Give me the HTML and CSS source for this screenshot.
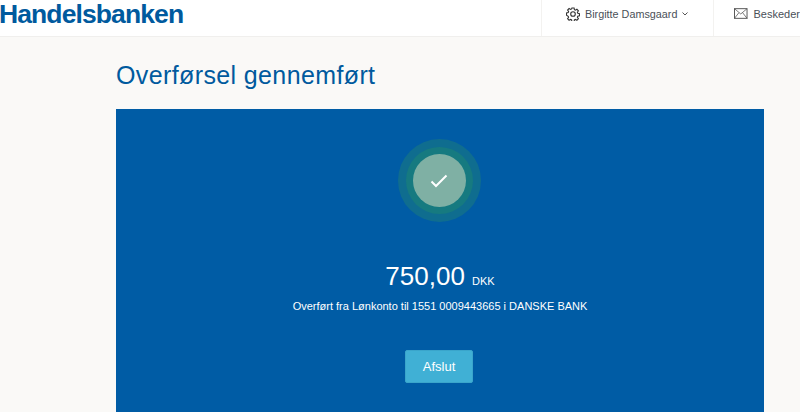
FILE: index.html
```html
<!DOCTYPE html>
<html>
  <head>
    <meta charset="utf-8">
    <link rel="stylesheet" href="styles.css">
  </head>
  <body>
    <div class="topbar">
      <div class="logo">Handelsbanken</div>
      <div class="top-item user-item">
        <svg class="gear" width="14" height="14" viewBox="0 0 14 14">
          <path d="M5.900 1h2.200l.3 1.700 1 .5 1.500-.9 1.500 1.600-1 1.400.4 1 1.700.4v2.200l-1.700.4-.4 1 1 1.400-1.500 1.600-1.500-.9-1 .5-.3 1.700H5.900l-.3-1.700-1-.5-1.500.9-1.500-1.600 1-1.400-.4-1L.5 8.100V5.900l1.700-.4.4-1-1-1.400 1.500-1.600 1.500.9 1-.5z" fill="none" stroke="#333" stroke-width="1.100"/>
          <circle cx="7" cy="7" r="2.300" fill="none" stroke="#333" stroke-width="1.100"/>
        </svg>
        <span>Birgitte Damsgaard</span>
        <svg width="6" height="4" viewBox="0 0 6 4"><path d="M.5.5L3 3 5.500.5" fill="none" stroke="#555" stroke-width="1"/></svg>
      </div>
      <div class="top-item mail-item">
        <svg width="14" height="11" viewBox="0 0 14 11">
          <rect x=".5" y=".5" width="13" height="10" fill="none" stroke="#555" stroke-width="1"/>
          <path d="M.5.5L7 6 13.500.5M.5 10.500L5 4.800M13.500 10.500L9 4.800" fill="none" stroke="#555" stroke-width=".8"/>
        </svg>
        <span>Beskeder</span>
      </div>
    </div>

    <div class="content">
      <h1 class="page-title">Overførsel gennemført</h1>
      <div class="receipt">
        <div class="ring-outer">
          <div class="ring-inner">
            <div class="ring-core">
              <svg width="18" height="14" viewBox="0 0 18 14"><path d="M1.500 7.500L6 12 16.500 1.500" fill="none" stroke="#fff" stroke-width="2"/></svg>
            </div>
          </div>
        </div>
        <div class="amount">750,00 <span class="currency">DKK</span></div>
        <div class="details">Overført fra Lønkonto til 1551 0009443665 i DANSKE BANK</div>
        <button class="finish-btn">Afslut</button>
      </div>
    </div>
  </body>
</html>
```

FILE: styles.css
```css
html, body {
  margin: 0;
  height: 412px;
  overflow: hidden;
}

body {
  background-color: #faf9f7;
  font-family: "Liberation Sans", Arial, sans-serif;
}

.topbar {
  display: flex;
  height: 36px;
  background-color: #fff;
  border-bottom: 1px solid #f0efed;
  overflow: hidden;
}

.logo {
  flex: 1;
  margin-left: -1px;
  padding-top: 1px;
  color: #005a9e;
  font-size: 26.500px;
  font-weight: bold;
  letter-spacing: -0.900px;
  line-height: 27px;
}

.top-item {
  display: flex;
  align-items: center;
  gap: 6px;
  padding-bottom: 9px;
  font-size: 11px;
  color: #4a5058;
  border-left: 1px solid #f3f2f0;
}

.user-item {
  width: 172px;
  padding-left: 24px;
  box-sizing: border-box;
  gap: 5px;
}

.user-item span {
  font-size: 10.800px;
}

.mail-item {
  width: 87px;
  padding-left: 20px;
  box-sizing: border-box;
  white-space: nowrap;
}

.content {
  padding: 0 36px 0 116px;
}

.page-title {
  margin: 0;
  padding: 22px 0 17px;
  color: #005a9e;
  font-size: 25px;
  font-weight: normal;
  line-height: 33px;
  letter-spacing: 0.380px;
}

.receipt {
  display: flex;
  flex-direction: column;
  align-items: center;
  height: 320px;
  padding-top: 30px;
  box-sizing: border-box;
  background-color: #005ca5;
  color: #fff;
}

.ring-outer {
  display: flex;
  align-items: center;
  justify-content: center;
  width: 83px;
  height: 83px;
  margin-right: 2px;
  border-radius: 50%;
  background-color: #0f6d8f;
}

.ring-inner {
  display: flex;
  align-items: center;
  justify-content: center;
  width: 67px;
  height: 67px;
  border-radius: 50%;
  background-color: #167a80;
}

.ring-core {
  display: flex;
  align-items: center;
  justify-content: center;
  width: 53px;
  height: 53px;
  border-radius: 50%;
  background-color: #7fb0a4;
}

.amount {
  margin-top: 38px;
  font-size: 26px;
  line-height: 32px;
}

.currency {
  font-size: 11px;
}

.details {
  margin-top: 1px;
  font-size: 11px;
  line-height: 16px;
}

.finish-btn {
  width: 68px;
  height: 33px;
  margin-top: 36px;
  margin-right: 2px;
  border: 1px solid #3aa5cb;
  border-radius: 2px;
  background-color: #40b0d5;
  color: #fff;
  font-family: inherit;
  font-size: 13px;
  font-weight: normal;
}
```
